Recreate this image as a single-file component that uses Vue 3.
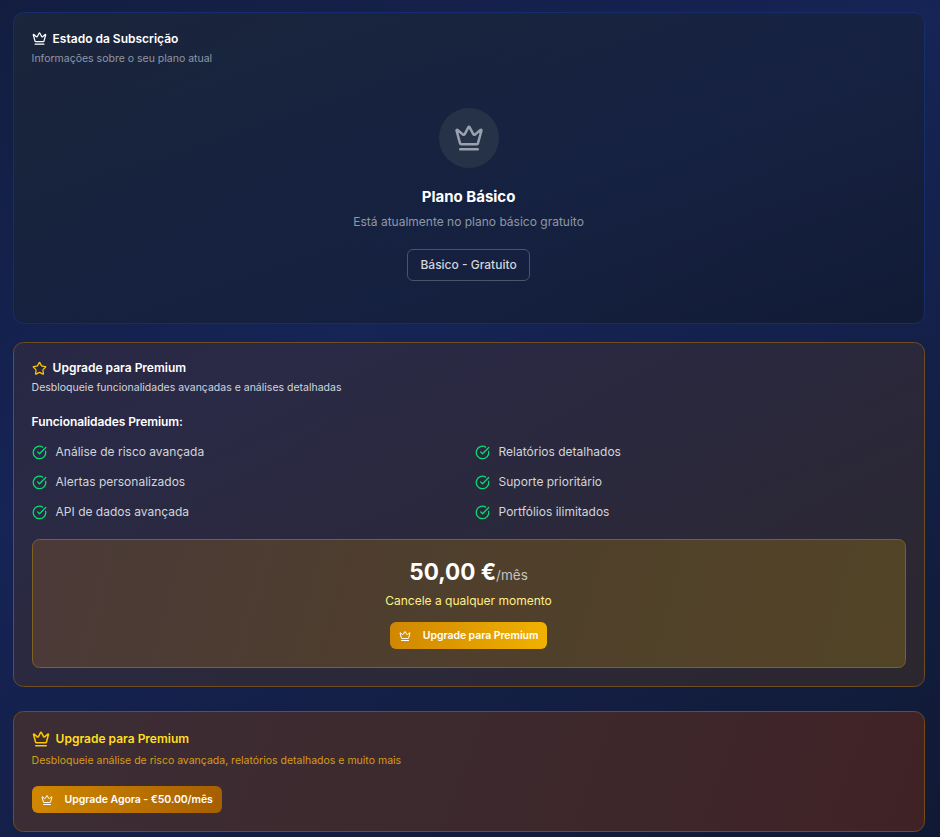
<script setup>
import { h } from 'vue'

const Crown = () =>
  h('svg', { viewBox: '0 0 24 24', class: 'icon' }, [
    h('path', {
      d: 'M11.562 3.266a.5.5 0 0 1 .876 0L15.39 8.87a1 1 0 0 0 1.516.294L21.183 5.5a.5.5 0 0 1 .798.519l-2.834 10.246a1 1 0 0 1-.956.734H5.81a1 1 0 0 1-.957-.734L2.02 6.02a.5.5 0 0 1 .798-.519l4.276 3.664a1 1 0 0 0 1.516-.294z'
    }),
    h('path', { d: 'M5 21h14' })
  ])

const features = [
  'Análise de risco avançada',
  'Relatórios detalhados',
  'Alertas personalizados',
  'Suporte prioritário',
  'API de dados avançada',
  'Portfólios ilimitados'
]
</script>

<template>
  <main class="page">
    <section class="card status">
      <h2 class="title"><Crown class="i15" /><span>Estado da Subscrição</span></h2>
      <p class="sub">Informações sobre o seu plano atual</p>
      <div class="plan">
        <div class="disc"><Crown class="i30" /></div>
        <h3>Plano Básico</h3>
        <p>Está atualmente no plano básico gratuito</p>
        <span class="pill">Básico - Gratuito</span>
      </div>
    </section>

    <section class="card premium">
      <h2 class="title">
        <svg class="icon i15 star" viewBox="0 0 24 24">
          <path d="M11.525 2.295a.53.53 0 0 1 .95 0l2.31 4.679a2.123 2.123 0 0 0 1.595 1.16l5.166.756a.53.53 0 0 1 .294.904l-3.736 3.638a2.123 2.123 0 0 0-.611 1.878l.882 5.14a.53.53 0 0 1-.771.56l-4.618-2.428a2.122 2.122 0 0 0-1.973 0L6.396 21.01a.53.53 0 0 1-.77-.56l.881-5.139a2.122 2.122 0 0 0-.611-1.879L2.16 9.795a.53.53 0 0 1 .294-.906l5.165-.755a2.122 2.122 0 0 0 1.597-1.16z" />
        </svg>
        <span>Upgrade para Premium</span>
      </h2>
      <p class="sub">Desbloqueie funcionalidades avançadas e análises detalhadas</p>
      <h3 class="heading">Funcionalidades Premium:</h3>
      <ul class="features">
        <li v-for="f in features" :key="f">
          <svg class="icon i15 check" viewBox="0 0 24 24">
            <path d="M21.801 10A10 10 0 1 1 17 3.335" />
            <path d="m9 11 3 3L22 4" />
          </svg>
          <span>{{ f }}</span>
        </li>
      </ul>
      <div class="offer">
        <div class="price"><strong>50,00 €</strong><span>/mês</span></div>
        <p>Cancele a qualquer momento</p>
        <button class="btn bright"><Crown class="i12" />Upgrade para Premium</button>
      </div>
    </section>

    <section class="card banner">
      <h2 class="title"><Crown class="i18" /><span>Upgrade para Premium</span></h2>
      <p class="sub">Desbloqueie análise de risco avançada, relatórios detalhados e muito mais</p>
      <button class="btn deep"><Crown class="i12" />Upgrade Agora - €50.00/mês</button>
    </section>
  </main>
</template>

<style>
body {
  background: #101a33;
}
</style>

<style scoped>
* {
  box-sizing: border-box;
  margin: 0;
  padding: 0;
}
.page {
  height: 837px;
  overflow: hidden;
  padding: 12px 15.5px 0 12.6px;
  font-family: Inter, sans-serif;
  color: #fff;
  background: linear-gradient(151.8deg, #0f172b -440px, #162456 460px, #0f172b 1360px);
}
.card {
  border: 1px solid;
  border-radius: 10.5px;
  padding: 18px;
}
.status {
  height: 312px;
  border-color: #172c6c;
  background: linear-gradient(to bottom right, rgba(30, 41, 57, 0.7), rgba(23, 33, 53, 0.6) 50%, rgba(16, 24, 40, 0.6));
}
.premium {
  height: 345px;
  margin-top: 18px;
  border-color: #6f4d20;
  background: linear-gradient(to bottom right, rgba(66, 48, 54, 0.43), rgba(70, 50, 35, 0.5));
}
.banner {
  height: 121px;
  margin-top: 24px;
  border-color: #774a19;
  background: linear-gradient(110deg, #3c2d35, #3c292d 50%, #402226);
}
.icon {
  display: block;
  flex: none;
  fill: none;
  stroke: currentColor;
  stroke-width: 2;
  stroke-linecap: round;
  stroke-linejoin: round;
}
.i12 { width: 12px; height: 12px; }
.i15 { width: 15px; height: 15px; }
.i18 { width: 18px; height: 18px; }
.i30 { width: 30px; height: 30px; }
.title {
  display: flex;
  align-items: center;
  gap: 6px;
  height: 15px;
  font-size: 12px;
  line-height: 15px;
  font-weight: 600;
}
.sub {
  margin-top: 5px;
  font-size: 10.5px;
  line-height: 15px;
  color: #8f97a6;
}
.plan {
  display: flex;
  flex-direction: column;
  align-items: center;
  padding-top: 42px;
}
.disc {
  width: 60px;
  height: 60px;
  border-radius: 50%;
  display: flex;
  align-items: center;
  justify-content: center;
  background: #263247;
  color: #99a1af;
}
.plan h3 {
  margin-top: 18px;
  font-size: 15px;
  line-height: 21px;
  font-weight: 700;
}
.plan p {
  margin-top: 6px;
  font-size: 12px;
  line-height: 18px;
  color: #8f97a6;
}
.pill {
  margin-top: 18px;
  height: 32px;
  width: 123px;
  border: 1px solid #4a5565;
  border-radius: 6px;
  font-size: 12px;
  line-height: 30px;
  font-weight: 500;
  text-align: center;
  color: #d1d5dc;
}
.premium .title span { padding-bottom: 2px; }
.premium .sub { margin-top: 4px; color: #d1d5dc; }
.star { color: #fdc700; }
.heading {
  margin-top: 17px;
  font-size: 12px;
  line-height: 20px;
  font-weight: 600;
  letter-spacing: -0.08px;
}
.features {
  display: grid;
  grid-template-columns: 1fr 1fr;
  gap: 12px;
  margin-top: 11px;
  list-style: none;
}
.features li {
  display: flex;
  align-items: center;
  gap: 9px;
  height: 18px;
  font-size: 12px;
  line-height: 18px;
  color: #d1d5dc;
}
.check { color: #05df72; }
.offer {
  display: flex;
  flex-direction: column;
  align-items: center;
  height: 129px;
  margin-top: 18px;
  padding-top: 18px;
  border: 1px solid #7f6122;
  border-radius: 7.5px;
  background: linear-gradient(105deg, #4b3a38, #4f3f2c 50%, #524426);
}
.price {
  display: flex;
  align-items: baseline;
  line-height: 27px;
}
.price strong { font-size: 22.5px; font-weight: 700; }
.price span { font-size: 13.5px; color: #c5c3c4; }
.offer p {
  margin-top: 3px;
  font-size: 12px;
  line-height: 18px;
  color: #fff085;
}
.btn {
  display: flex;
  align-items: center;
  height: 27px;
  border: 0;
  border-radius: 6px;
  padding: 0 9px;
  font: 600 10.5px/27px Inter, sans-serif;
  letter-spacing: -0.06px;
  color: #fff;
}
.btn .icon { margin-right: 12px; }
.bright {
  margin-top: 12px;
  background: linear-gradient(to right, #d08700, #f0b100);
}
.banner .title { height: 18px; color: #fdc700; }
.banner .title span { padding-bottom: 2px; color: #ffdf20; }
.banner .sub { margin-top: 5px; color: #d69c13; }
.deep {
  margin-top: 18px;
  background: linear-gradient(to right, #d08700, #a65f00);
}
</style>
